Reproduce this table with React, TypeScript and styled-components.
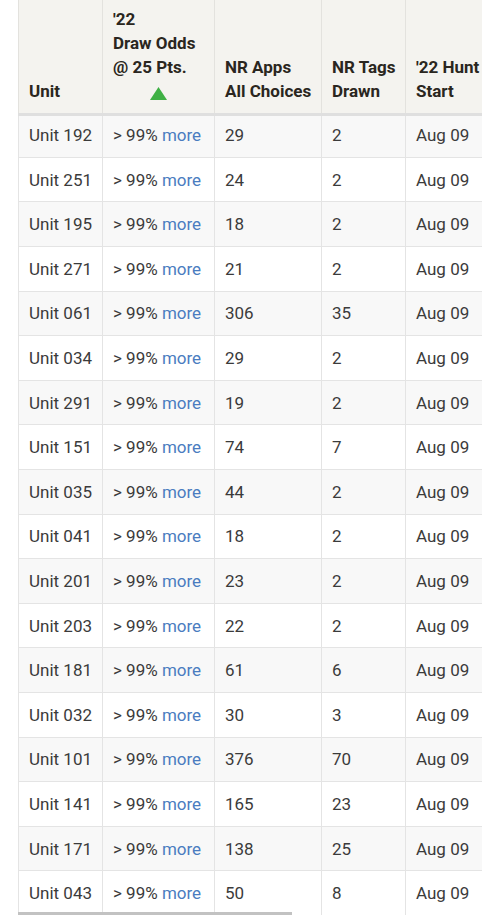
import React from "react";
import styled, { createGlobalStyle } from "styled-components";

const GlobalStyle = createGlobalStyle`
  html, body {
    margin: 0;
    padding: 0;
    background: #ffffff;
    font-family: Roboto, "Liberation Sans", Arial, sans-serif;
  }
`;

const Page = styled.div`
  padding-left: 18px;
  overflow: hidden;
  height: 915px;
`;

const Scroller = styled.div`
  width: 464px;
  overflow: hidden;
`;

const Table = styled.table`
  width: 464px;
  table-layout: fixed;
  border-collapse: collapse;
  font-size: 17px;
  line-height: 24px;
  color: #3b3b3b;
`;

const Th = styled.th`
  background: #f4f3ef;
  color: #2a2620;
  font-weight: 700;
  text-align: left;
  vertical-align: bottom;
  white-space: nowrap;
  padding: 7px 10px 10px 10px;
  border-left: 1px solid #e3e2de;
  border-right: 1px solid #e3e2de;
  border-bottom: 3px solid #dfdfdf;
`;

const Row = styled.tr<{ $striped: boolean }>`
  background: ${(p) => (p.$striped ? "#f8f8f8" : "#ffffff")};
  &:first-child td {
    padding-top: 7px;
  }
`;

const Td = styled.td`
  padding: 9.8px 10px;
  border: 1px solid #e4e4e4;
  white-space: nowrap;
`;

const SortMark = styled.div`
  height: 24px;
  display: flex;
  justify-content: center;
  align-items: center;
  padding-top: 4px;
  box-sizing: border-box;
`;

const MoreLink = styled.a`
  color: #4a7cc0;
  text-decoration: none;
`;

const ScrollThumb = styled.div`
  position: fixed;
  left: 18px;
  bottom: 0;
  width: 274px;
  height: 3px;
  background: #c2c2c2;
`;

const rows: [string, string, string][] = [
  ["192", "29", "2"],
  ["251", "24", "2"],
  ["195", "18", "2"],
  ["271", "21", "2"],
  ["061", "306", "35"],
  ["034", "29", "2"],
  ["291", "19", "2"],
  ["151", "74", "7"],
  ["035", "44", "2"],
  ["041", "18", "2"],
  ["201", "23", "2"],
  ["203", "22", "2"],
  ["181", "61", "6"],
  ["032", "30", "3"],
  ["101", "376", "70"],
  ["141", "165", "23"],
  ["171", "138", "25"],
  ["043", "50", "8"],
];

export default function App() {
  return (
    <>
      <GlobalStyle />
      <Page>
        <Scroller>
          <Table>
            <colgroup>
              <col style={{ width: 84 }} />
              <col style={{ width: 112 }} />
              <col style={{ width: 107 }} />
              <col style={{ width: 84 }} />
              <col style={{ width: 77 }} />
            </colgroup>
            <thead>
              <tr>
                <Th>Unit</Th>
                <Th>
                  '22
                  <br />
                  Draw Odds
                  <br />@ 25 Pts.
                  <SortMark>
                    <svg width="17" height="13" viewBox="0 0 17 13">
                      <polygon points="8.5,0 17,13 0,13" fill="#3fb044" />
                    </svg>
                  </SortMark>
                </Th>
                <Th>
                  NR Apps
                  <br />
                  All Choices
                </Th>
                <Th>
                  NR Tags
                  <br />
                  Drawn
                </Th>
                <Th>
                  '22 Hunt
                  <br />
                  Start
                </Th>
              </tr>
            </thead>
            <tbody>
              {rows.map(([unit, apps, tags], i) => (
                <Row key={unit} $striped={i % 2 === 0}>
                  <Td>Unit {unit}</Td>
                  <Td>
                    &gt; 99% <MoreLink href="#">more</MoreLink>
                  </Td>
                  <Td>{apps}</Td>
                  <Td>{tags}</Td>
                  <Td>Aug 09</Td>
                </Row>
              ))}
            </tbody>
          </Table>
        </Scroller>
      </Page>
      <ScrollThumb />
    </>
  );
}
